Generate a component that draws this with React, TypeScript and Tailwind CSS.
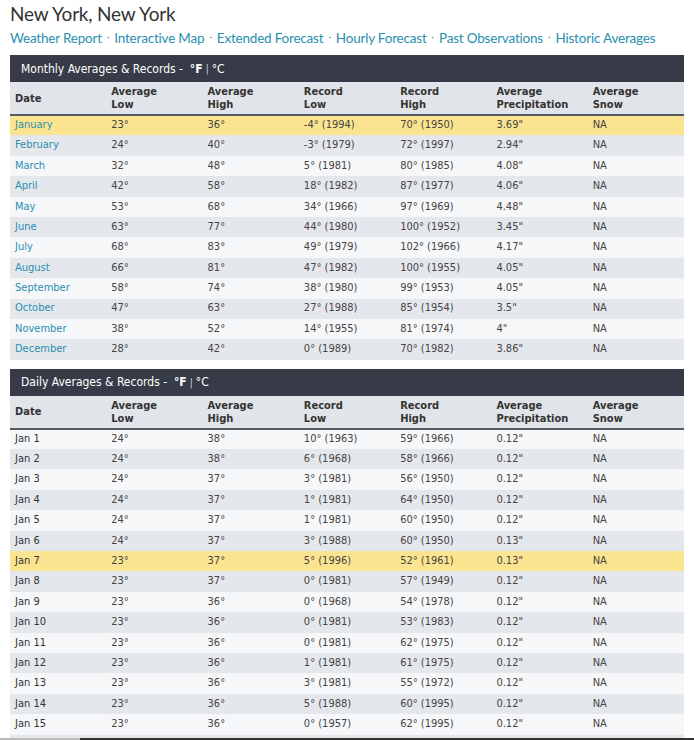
import React from 'react';

type Row = [string, string, string, string, string, string];

const monthly: Row[] = [
    ['January', '23°', '36°', '-4° (1994)', '70° (1950)', '3.69"'],
    ['February', '24°', '40°', '-3° (1979)', '72° (1997)', '2.94"'],
    ['March', '32°', '48°', '5° (1981)', '80° (1985)', '4.08"'],
    ['April', '42°', '58°', '18° (1982)', '87° (1977)', '4.06"'],
    ['May', '53°', '68°', '34° (1966)', '97° (1969)', '4.48"'],
    ['June', '63°', '77°', '44° (1980)', '100° (1952)', '3.45"'],
    ['July', '68°', '83°', '49° (1979)', '102° (1966)', '4.17"'],
    ['August', '66°', '81°', '47° (1982)', '100° (1955)', '4.05"'],
    ['September', '58°', '74°', '38° (1980)', '99° (1953)', '4.05"'],
    ['October', '47°', '63°', '27° (1988)', '85° (1954)', '3.5"'],
    ['November', '38°', '52°', '14° (1955)', '81° (1974)', '4"'],
    ['December', '28°', '42°', '0° (1989)', '70° (1982)', '3.86"'],
];

const daily: Row[] = [
    ['Jan 1', '24°', '38°', '10° (1963)', '59° (1966)', '0.12"'],
    ['Jan 2', '24°', '38°', '6° (1968)', '58° (1966)', '0.12"'],
    ['Jan 3', '24°', '37°', '3° (1981)', '56° (1950)', '0.12"'],
    ['Jan 4', '24°', '37°', '1° (1981)', '64° (1950)', '0.12"'],
    ['Jan 5', '24°', '37°', '1° (1981)', '60° (1950)', '0.12"'],
    ['Jan 6', '24°', '37°', '3° (1988)', '60° (1950)', '0.13"'],
    ['Jan 7', '23°', '37°', '5° (1996)', '52° (1961)', '0.13"'],
    ['Jan 8', '23°', '37°', '0° (1981)', '57° (1949)', '0.12"'],
    ['Jan 9', '23°', '36°', '0° (1968)', '54° (1978)', '0.12"'],
    ['Jan 10', '23°', '36°', '0° (1981)', '53° (1983)', '0.12"'],
    ['Jan 11', '23°', '36°', '0° (1981)', '62° (1975)', '0.12"'],
    ['Jan 12', '23°', '36°', '1° (1981)', '61° (1975)', '0.12"'],
    ['Jan 13', '23°', '36°', '3° (1981)', '55° (1972)', '0.12"'],
    ['Jan 14', '23°', '36°', '5° (1988)', '60° (1995)', '0.12"'],
    ['Jan 15', '23°', '36°', '0° (1957)', '62° (1995)', '0.12"'],
    ['Jan 16', '23°', '36°', '2° (1977)', '63° (1995)', '0.12"'],
];

const links = ['Weather Report', 'Interactive Map', 'Extended Forecast', 'Hourly Forecast', 'Past Observations', 'Historic Averages'];

const headers = [['Date'], ['Average', 'Low'], ['Average', 'High'], ['Record', 'Low'], ['Record', 'High'], ['Average', 'Precipitation'], ['Average', 'Snow']];

const tableFont = { fontFamily: '"DejaVu Sans Condensed", "DejaVu Sans", sans-serif' };

function RecordsTable({ title, rows, highlight, linkDates }: { title: string; rows: Row[]; highlight: number; linkDates?: boolean }) {
    return (
        <div style={tableFont}>
            <div className="h-[27px] bg-[#363b47] text-white text-[12px] flex items-center pl-[11px]">
                <span>{title} -&nbsp;&nbsp;</span>
                <span className="font-bold">°F</span>
                <span className="text-[10px] px-[3px] text-gray-300">|</span>
                <span>°C</span>
            </div>
            <table className="w-full table-fixed border-collapse text-[11px]">
                <thead>
                    <tr className="bg-[#e1e4e9] border-b-2 border-[#555a63] h-[33px]">
                        {headers.map((h, i) => (
                            <th key={i} className="text-left font-bold text-[#333] pl-[5px] leading-[13px] align-middle">
                                {h.map((l, j) => (<div key={j}>{l}</div>))}
                            </th>
                        ))}
                    </tr>
                </thead>
                <tbody>
                    {rows.map((r, i) => (
                        <tr key={i} className={`h-[20.4px] ${i === highlight ? 'bg-[#fbe48f]' : i % 2 === 1 ? 'bg-[#e4e7ec]' : 'bg-[#f6f7f9]'}`}>
                            <td className={`pl-[5px] ${linkDates ? 'text-[#2a8fb0]' : 'text-[#333]'}`}>{r[0]}</td>
                            {r.slice(1).map((c, j) => (
                                <td key={j} className="pl-[5px] text-[#444]">{c}</td>
                            ))}
                            <td className="pl-[5px] text-[#444]">NA</td>
                        </tr>
                    ))}
                </tbody>
            </table>
        </div>
    );
}

export default function App() {
    return (
        <div className="bg-white h-[740px] overflow-hidden px-[10px]" style={{ fontFamily: 'Lato, "Open Sans", sans-serif' }}>
            <h1 className="text-[19px] leading-[28px] tracking-[-0.2px] text-[#333]">New York, New York</h1>
            <div className="text-[13.5px] leading-[20px] mb-[6px] tracking-[-0.2px] whitespace-nowrap text-[#2a8fb0]">
                {links.map((l, i) => (
                    <React.Fragment key={l}>
                        {i > 0 && <span className="text-[#777] px-[5px] relative -top-[3px] text-[10px]">·</span>}
                        <span>{l}</span>
                    </React.Fragment>
                ))}
            </div>
            <RecordsTable title="Monthly Averages & Records" rows={monthly} highlight={0} linkDates />
            <div className="h-[9px]" />
            <RecordsTable title="Daily Averages & Records" rows={daily} highlight={6} />
            <div className="fixed bottom-0 left-0 right-0 h-[2px] flex">
                <div className="w-[80px] bg-[#bbb]" />
                <div className="flex-1 bg-[#333]" />
            </div>
        </div>
    );
}
